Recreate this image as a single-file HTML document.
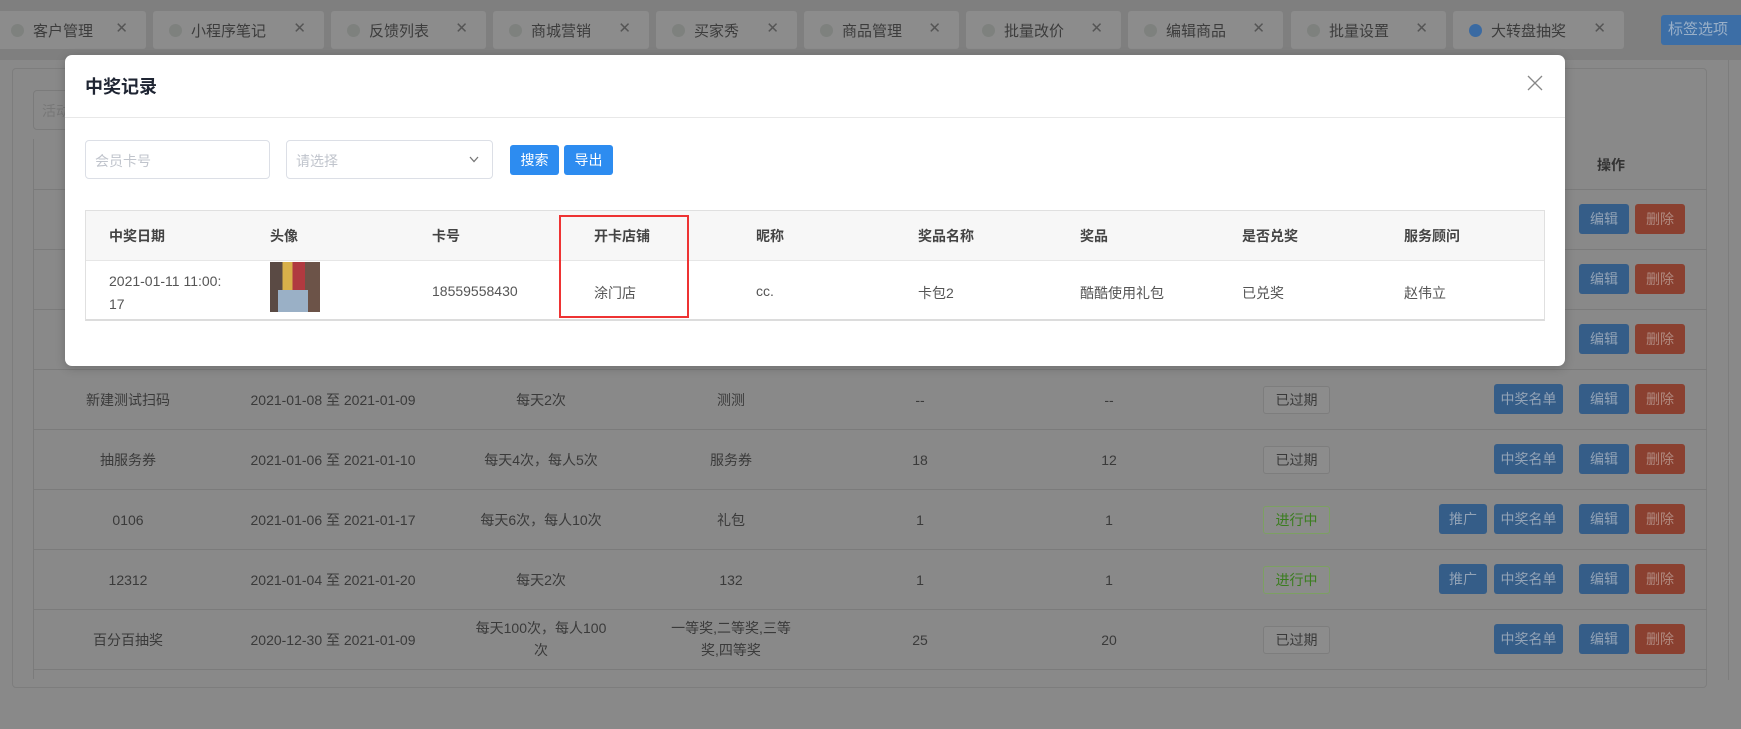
<!DOCTYPE html>
<html><head><meta charset="utf-8"><style>
*{box-sizing:border-box;margin:0;padding:0}
body{width:1741px;height:676px;overflow:hidden;background:#898989;font-family:"Liberation Sans","Noto Sans CJK SC",sans-serif;position:relative;color:#3a3a3a;font-size:14px}
.abs{position:absolute}
.tab{position:absolute;top:11px;height:38px;background:#8c8c8c;border-radius:3px}
.tab .d{position:absolute;left:16px;top:13px;width:13px;height:13px;border-radius:50%;background:#7e817e}
.tab .t{position:absolute;left:38px;top:9px;font-size:15px;color:#3c3c3c}
.tab .x{position:absolute;right:18px;top:8px;font-size:15px;color:#555}
.card{left:12px;top:68px;width:1695px;height:620px;border:1px solid #7d7d7d;border-radius:4px}
.row{position:absolute;left:33px;width:1674px;height:60px;border-top:1px solid #7b7b7b}
.c{position:absolute;transform:translateX(-50%);text-align:center;font-size:14px;color:#3a3a3a;line-height:22px}
.btn{position:absolute;height:30px;border-radius:3px;color:#93a3b6;font-size:14px;line-height:30px;text-align:center}
.b{background:#355d88}.r{background:#8a4030;color:#b08a80}
.tag{position:absolute;left:1263px;width:67px;height:28px;border:1px solid #7d7d7d;border-radius:3px;background:#8c8c8c;line-height:26px;text-align:center;color:#3a3a3a}
.tag.g{border-color:#7ca062;color:#3a7d1e}
.modal{left:65px;top:55px;width:1500px;height:311px;background:#fff;border-radius:7px;box-shadow:0 2px 10px rgba(0,0,0,.2)}
.th{position:absolute;top:0;line-height:50px;font-weight:bold;color:#444;font-size:14px}
.td{position:absolute;color:#555;font-size:14px}
</style></head><body>
<div class="abs" style="left:0;top:0;width:1741px;height:60px;background:#7f7f7f"></div>
<div class="tab" style="left:-5px;width:151px"><span class="d"></span><span class="t">客户管理</span><span class="x">✕</span></div>
<div class="tab" style="left:153px;width:171px"><span class="d"></span><span class="t">小程序笔记</span><span class="x">✕</span></div>
<div class="tab" style="left:331px;width:155px"><span class="d"></span><span class="t">反馈列表</span><span class="x">✕</span></div>
<div class="tab" style="left:493px;width:156px"><span class="d"></span><span class="t">商城营销</span><span class="x">✕</span></div>
<div class="tab" style="left:656px;width:141px"><span class="d"></span><span class="t">买家秀</span><span class="x">✕</span></div>
<div class="tab" style="left:804px;width:155px"><span class="d"></span><span class="t">商品管理</span><span class="x">✕</span></div>
<div class="tab" style="left:966px;width:155px"><span class="d"></span><span class="t">批量改价</span><span class="x">✕</span></div>
<div class="tab" style="left:1128px;width:155px"><span class="d"></span><span class="t">编辑商品</span><span class="x">✕</span></div>
<div class="tab" style="left:1291px;width:155px"><span class="d"></span><span class="t">批量设置</span><span class="x">✕</span></div>
<div class="tab" style="left:1453px;width:171px"><span class="d" style="background:#3a6aa2"></span><span class="t">大转盘抽奖</span><span class="x">✕</span></div>
<div class="abs" style="left:1661px;top:15px;width:85px;height:30px;background:#3c6ea6;border-radius:3px;color:#9ab0c8;font-size:15px;line-height:30px;padding-left:7px">标签选项</div>

<div class="abs card"></div>
<div class="abs" style="left:33px;top:90px;width:60px;height:40px;border:1px solid #7b7b7b;border-radius:4px;color:#777;padding:10px 8px">活动</div>
<div class="abs" style="left:33px;top:139px;width:1674px;height:540px;border-left:1px solid #7b7b7b"></div>
<div class="abs" style="left:1597px;top:155px;font-weight:bold;color:#333">操作</div>
<div class="row" style="top:189px"></div>
<div class="btn b" style="left:1579px;top:204px;width:50px">编辑</div><div class="btn r" style="left:1635px;top:204px;width:50px">删除</div>
<div class="row" style="top:249px"></div>
<div class="btn b" style="left:1579px;top:264px;width:50px">编辑</div><div class="btn r" style="left:1635px;top:264px;width:50px">删除</div>
<div class="row" style="top:309px"></div>
<div class="btn b" style="left:1579px;top:324px;width:50px">编辑</div><div class="btn r" style="left:1635px;top:324px;width:50px">删除</div>

<div class="row" style="top:369px"></div>
<div class="c" style="left:128px;top:389px">新建测试扫码</div><div class="c" style="left:333px;top:389px">2021-01-08 至 2021-01-09</div><div class="c" style="left:541px;top:389px">每天2次</div><div class="c" style="left:731px;top:389px">测测</div><div class="c" style="left:920px;top:389px">--</div><div class="c" style="left:1109px;top:389px">--</div>
<div class="tag" style="top:386px">已过期</div>
<div class="btn b" style="left:1494px;top:384px;width:69px">中奖名单</div><div class="btn b" style="left:1579px;top:384px;width:50px">编辑</div><div class="btn r" style="left:1635px;top:384px;width:50px">删除</div>

<div class="row" style="top:429px"></div>
<div class="c" style="left:128px;top:449px">抽服务券</div><div class="c" style="left:333px;top:449px">2021-01-06 至 2021-01-10</div><div class="c" style="left:541px;top:449px">每天4次，每人5次</div><div class="c" style="left:731px;top:449px">服务券</div><div class="c" style="left:920px;top:449px">18</div><div class="c" style="left:1109px;top:449px">12</div>
<div class="tag" style="top:446px">已过期</div>
<div class="btn b" style="left:1494px;top:444px;width:69px">中奖名单</div><div class="btn b" style="left:1579px;top:444px;width:50px">编辑</div><div class="btn r" style="left:1635px;top:444px;width:50px">删除</div>

<div class="row" style="top:489px"></div>
<div class="c" style="left:128px;top:509px">0106</div><div class="c" style="left:333px;top:509px">2021-01-06 至 2021-01-17</div><div class="c" style="left:541px;top:509px">每天6次，每人10次</div><div class="c" style="left:731px;top:509px">礼包</div><div class="c" style="left:920px;top:509px">1</div><div class="c" style="left:1109px;top:509px">1</div>
<div class="tag g" style="top:506px">进行中</div>
<div class="btn b" style="left:1439px;top:504px;width:48px">推广</div><div class="btn b" style="left:1494px;top:504px;width:69px">中奖名单</div><div class="btn b" style="left:1579px;top:504px;width:50px">编辑</div><div class="btn r" style="left:1635px;top:504px;width:50px">删除</div>

<div class="row" style="top:549px"></div>
<div class="c" style="left:128px;top:569px">12312</div><div class="c" style="left:333px;top:569px">2021-01-04 至 2021-01-20</div><div class="c" style="left:541px;top:569px">每天2次</div><div class="c" style="left:731px;top:569px">132</div><div class="c" style="left:920px;top:569px">1</div><div class="c" style="left:1109px;top:569px">1</div>
<div class="tag g" style="top:566px">进行中</div>
<div class="btn b" style="left:1439px;top:564px;width:48px">推广</div><div class="btn b" style="left:1494px;top:564px;width:69px">中奖名单</div><div class="btn b" style="left:1579px;top:564px;width:50px">编辑</div><div class="btn r" style="left:1635px;top:564px;width:50px">删除</div>

<div class="row" style="top:609px"></div>
<div class="c" style="left:128px;top:629px">百分百抽奖</div><div class="c" style="left:333px;top:629px">2020-12-30 至 2021-01-09</div><div class="c" style="left:541px;top:617px;width:132px">每天100次，每人100次</div><div class="c" style="left:731px;top:617px;width:128px">一等奖,二等奖,三等奖,四等奖</div><div class="c" style="left:920px;top:629px">25</div><div class="c" style="left:1109px;top:629px">20</div>
<div class="tag" style="top:626px">已过期</div>
<div class="btn b" style="left:1494px;top:624px;width:69px">中奖名单</div><div class="btn b" style="left:1579px;top:624px;width:50px">编辑</div><div class="btn r" style="left:1635px;top:624px;width:50px">删除</div>
<div class="row" style="top:669px"></div>
<div class="abs" style="left:1728px;top:60px;width:1px;height:620px;background:#7d7d7d"></div>

<div class="abs modal">
 <div class="abs" style="left:20px;top:18px;font-size:18px;font-weight:bold;color:#1f2533">中奖记录</div>
 <svg class="abs" style="left:1462px;top:20px" width="16" height="16" viewBox="0 0 16 16"><path d="M1 1L15 15M15 1L1 15" stroke="#888" stroke-width="1.3" fill="none"/></svg>
 <div class="abs" style="left:0;top:62px;width:1500px;height:1px;background:#e8e8e8"></div>
 <div class="abs" style="left:20px;top:85px;width:185px;height:39px;border:1px solid #dcdfe6;border-radius:4px;color:#c0c4cc;padding:10px 9px">会员卡号</div>
 <div class="abs" style="left:221px;top:85px;width:207px;height:39px;border:1px solid #dcdfe6;border-radius:4px;color:#c0c4cc;padding:10px 9px">请选择<svg style="position:absolute;right:13px;top:15px" width="10" height="7" viewBox="0 0 10 7"><path d="M1 1L5 5.5L9 1" stroke="#777" stroke-width="1.3" fill="none"/></svg></div>
 <div class="abs" style="left:445px;top:90px;width:49px;height:30px;background:#2d8cf0;border-radius:3px;color:#fff;text-align:center;line-height:30px">搜索</div>
 <div class="abs" style="left:499px;top:90px;width:49px;height:30px;background:#2d8cf0;border-radius:3px;color:#fff;text-align:center;line-height:30px">导出</div>
 <div class="abs" style="left:20px;top:155px;width:1460px;height:111px;border:1px solid #e0e0e0;border-bottom:2px solid #dcdcdc">
  <div class="abs" style="left:0;top:0;width:1458px;height:50px;background:#f7f7f7;border-bottom:1px solid #e6e6e6"></div>
  <span class="th" style="left:23px">中奖日期</span><span class="th" style="left:184px">头像</span><span class="th" style="left:346px">卡号</span><span class="th" style="left:508px">开卡店铺</span><span class="th" style="left:670px">昵称</span><span class="th" style="left:832px">奖品名称</span><span class="th" style="left:994px">奖品</span><span class="th" style="left:1156px">是否兑奖</span><span class="th" style="left:1318px">服务顾问</span>
  <span class="td" style="left:23px;top:59px;line-height:23px">2021-01-11 11:00:<br>17</span>
  <div class="abs" style="left:184px;top:51px;width:50px;height:50px;background:linear-gradient(90deg,#5a4a44 0 25%,#d8b04a 25% 45%,#b03a40 45% 70%,#6c5348 70%)"><div class="abs" style="left:8px;top:28px;width:30px;height:22px;background:#9ab0c6"></div></div>
  <span class="td" style="left:346px;top:72px">18559558430</span>
  <span class="td" style="left:508px;top:72px">涂门店</span>
  <span class="td" style="left:670px;top:72px">cc.</span>
  <span class="td" style="left:832px;top:72px">卡包2</span>
  <span class="td" style="left:994px;top:72px">酷酷使用礼包</span>
  <span class="td" style="left:1156px;top:72px">已兑奖</span>
  <span class="td" style="left:1318px;top:72px">赵伟立</span>
 </div>
 <div class="abs" style="left:494px;top:160px;width:130px;height:103px;border:2px solid #ee3333"></div>
</div>
</body></html>
